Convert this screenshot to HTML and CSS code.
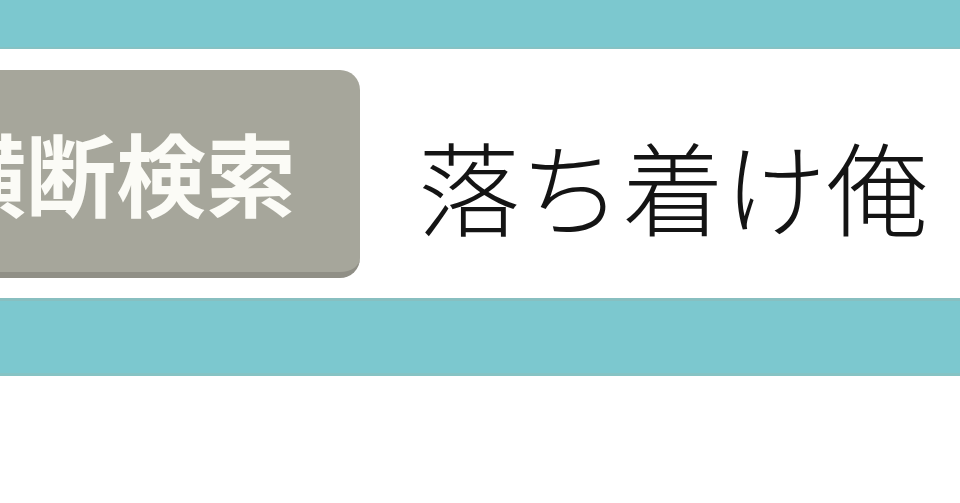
FILE: index.html
```html
<!DOCTYPE html>
<html lang="ja">
<head>
<meta charset="utf-8">
<link rel="stylesheet" href="styles.css">
</head>
<body>
<div class="bar bar-top"></div>
<div class="row">
  <div class="btn">横断検索</div>
  <div class="query">落ち着け俺</div>
</div>
<div class="bar bar-bottom"></div>
</body>
</html>
```
FILE: styles.css
```css
html, body {
  margin: 0;
  padding: 0;
  background: #ffffff;
  overflow: hidden;
}
body {
  width: 960px;
  height: 503px;
  font-family: "Noto Sans CJK JP", "Noto Sans", sans-serif;
}
.bar {
  background: #7cc8cf;
  box-sizing: border-box;
}
.bar-top {
  height: 49px;
  border-bottom: 2px solid #86c2c4;
}
.bar-bottom {
  height: 78px;
  border-top: 3px solid #88bfc0;
  border-bottom: 3px solid #86c3c4;
}
.row {
  height: 249px;
  display: flex;
  align-items: center;
  overflow: hidden;
}
.btn {
  flex: none;
  margin-left: -130px;
  height: 208px;
  box-sizing: border-box;
  padding: 0 64px 0 66px;
  background: #a6a69b;
  border-bottom: 6px solid #908f86;
  border-radius: 20px;
  color: #fbfbf6;
  font-weight: 700;
  font-size: 90px;
  line-height: 1;
  display: flex;
  align-items: center;
  white-space: nowrap;
}
.query {
  flex: none;
  margin-left: 58px;
  margin-top: 22px;
  font-size: 102px;
  font-weight: 300;
  line-height: 1;
  color: #141414;
  white-space: nowrap;
}
```
